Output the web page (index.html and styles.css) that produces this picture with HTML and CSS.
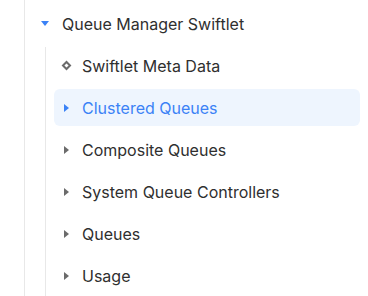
FILE: index.html
```html
<!DOCTYPE html>
<html lang="en">
<head>
  <meta charset="UTF-8">
  <meta name="viewport" content="width=device-width, initial-scale=1.0">
  <title>Swiftlet Tree</title>
  <link rel="stylesheet" href="styles.css">
</head>
<body>
  <div class="tree">
    <div class="tree-node">
      <div class="tree-row open">
        <span class="caret caret-down"></span>
        <span class="label">Queue Manager Swiftlet</span>
      </div>
      <ul class="children">
        <li class="tree-row">
          <span class="leaf"></span>
          <span class="label">Swiftlet Meta Data</span>
        </li>
        <li class="tree-row selected">
          <span class="caret caret-right"></span>
          <span class="label">Clustered Queues</span>
        </li>
        <li class="tree-row">
          <span class="caret caret-right"></span>
          <span class="label">Composite Queues</span>
        </li>
        <li class="tree-row">
          <span class="caret caret-right"></span>
          <span class="label">System Queue Controllers</span>
        </li>
        <li class="tree-row">
          <span class="caret caret-right"></span>
          <span class="label">Queues</span>
        </li>
        <li class="tree-row">
          <span class="caret caret-right"></span>
          <span class="label">Usage</span>
        </li>
      </ul>
    </div>
  </div>
</body>
</html>
```

FILE: styles.css
```css
* {
  margin: 0;
  padding: 0;
  box-sizing: border-box;
}

body {
  font-family: Inter, 'Noto Sans', sans-serif;
  font-size: 16px;
  color: #2f2f2f;
  background: #ffffff;
  height: 296px;
  overflow: hidden;
}

.tree {
  margin-left: 24px;
  border-left: 1px solid #e8e8e8;
  padding-top: 5px;
  min-height: 296px;
}

.tree-row {
  display: flex;
  align-items: center;
  height: 37px;
  border-radius: 6px;
  list-style: none;
}

.tree-node > .tree-row {
  padding-left: 16px;
}

.children {
  margin-left: 20px;
  margin-top: 5px;
  border-left: 1px solid #e8e8e8;
  padding-left: 8px;
  padding-right: 8px;
  display: flex;
  flex-direction: column;
  gap: 5px;
  min-height: 260px;
}

.children .tree-row {
  padding-left: 10px;
}

.caret {
  width: 0;
  height: 0;
  flex-shrink: 0;
}

.caret-down {
  border-left: 4px solid transparent;
  border-right: 4px solid transparent;
  border-top: 5px solid #3b82f6;
  margin-right: 13px;
}

.caret-right {
  border-top: 4px solid transparent;
  border-bottom: 4px solid transparent;
  border-left: 5px solid #6b6b6b;
  margin-right: 13px;
}

.leaf {
  width: 7px;
  height: 7px;
  border: 2px solid #6b6b6b;
  transform: rotate(45deg);
  margin-left: -1px;
  margin-right: 12px;
  flex-shrink: 0;
}

.label {
  white-space: nowrap;
}

.selected {
  background: #eef5fe;
  color: #3b82f6;
}

.selected .caret-right {
  border-left-color: #3b82f6;
}
```
